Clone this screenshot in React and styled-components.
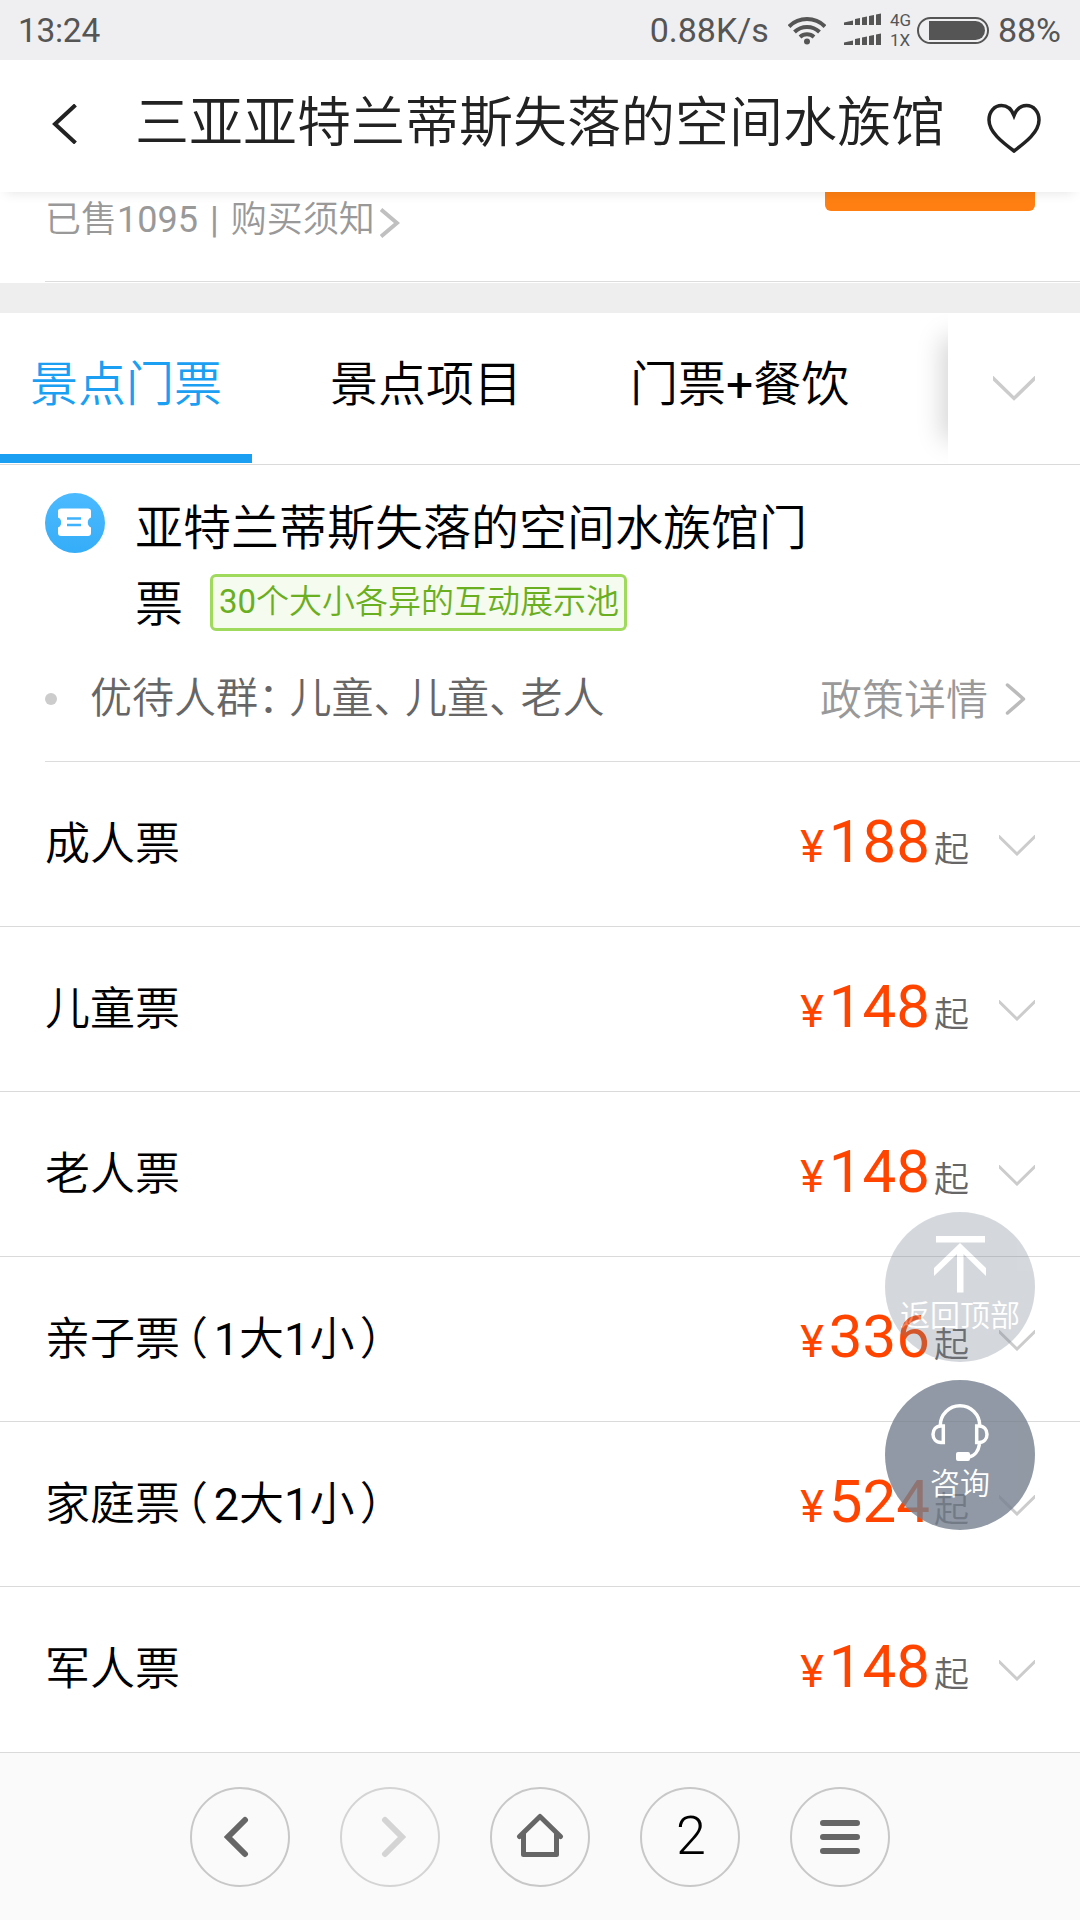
import styled, { createGlobalStyle, css } from "styled-components"

const GlobalStyle = createGlobalStyle`
  * {
    box-sizing: border-box;
  }
  body {
    margin: 0;
    background: #fff;
    color: #000;
    font-family: Roboto, "Noto Sans CJK SC", sans-serif;
    font-weight: 350;
  }
`

const Page = styled.div`
  position: relative;
  display: flex;
  flex-direction: column;
  width: 1080px;
  height: 1920px;
  overflow: hidden;
`

const StatusBar = styled.div`
  display: flex;
  align-items: center;
  justify-content: space-between;
  height: 60px;
  padding: 0 19px 0 18px;
  background: #efeff1;
  color: #555;
  font-size: 34px;
  font-weight: 400;
  line-height: 60px;
`

const Clock = styled.span`
  padding-top: 1px;
  font-size: 33.5px;
  letter-spacing: -0.3px;
`

const StatusIcons = styled.div`
  display: flex;
  align-items: center;
`

const Wifi = styled.svg`
  width: 38px;
  height: 30px;
  margin-left: 19px;
`

const Signals = styled.svg`
  width: 38px;
  height: 34px;
  margin-left: 18px;
`

const NetworkLabels = styled.div`
  width: 27px;
  margin-left: 8px;
  font-size: 17px;
  line-height: 20px;
`

const Battery = styled.div`
  width: 72px;
  height: 27px;
  margin-right: 9px;
  padding: 2px 2px 2px 10px;
  border: 2px solid #555;
  border-radius: 14px;
`

const BatteryLevel = styled.div`
  height: 19px;
  background: #555;
  border-radius: 0 10px 10px 0;
`

const Header = styled.header`
  position: relative;
  z-index: 1;
  display: flex;
  align-items: center;
  height: 132px;
  padding: 0 39px 0 52px;
  background: #fff;
  box-shadow: 0 6px 12px -6px rgba(0, 0, 0, 0.12);
`

const BackIcon = styled.svg`
  width: 25px;
  height: 40px;
  margin-bottom: 4px;
`

const HeartIcon = styled.svg`
  width: 54px;
  height: 50px;
  margin-top: 4px;
`

const Title = styled.h1`
  flex: 1;
  margin: 0 0 4px 58px;
  color: #222;
  font-size: 54px;
  font-weight: 350;
  line-height: 80px;
  white-space: nowrap;
`

const SoldRow = styled.div`
  display: flex;
  align-items: flex-start;
  justify-content: space-between;
  height: 90px;
  margin-left: 45px;
  padding-right: 45px;
  border-bottom: 1px solid #dcdcdc;
`

const SoldText = styled.div`
  display: flex;
  align-items: center;
  padding-top: 6px;
  color: #999;
  font-size: 36px;
  line-height: 44px;
  svg {
    margin: 6px 0 0 5px;
  }
`

const Num = styled.span`
  font-weight: 400;
`

const Bar = styled.span`
  margin: 0 12px;
  font-weight: 400;
`

const BookButton = styled.div`
  width: 210px;
  height: 19px;
  background: #ff7f12;
  border-radius: 0 0 6px 6px;
`

const Separator = styled.div`
  height: 30px;
  margin-top: 1px;
  background: #eee;
`

const Tabs = styled.nav`
  display: flex;
  gap: 48px;
  height: 152px;
  overflow: hidden;
  border-bottom: 1px solid #dadada;
`

const Tab = styled.div`
  height: 150px;
  padding: 34px 30px 0;
  font-size: 48px;
  line-height: 76px;
  white-space: nowrap;
  ${(props) =>
    props.$active &&
    css`
      color: #1a9ff2;
      border-bottom: 9px solid #1a9ff2;
    `}
`

const TabMore = styled.div`
  display: flex;
  align-items: center;
  justify-content: flex-end;
  width: 132px;
  margin-left: auto;
  padding-right: 45px;
  background: #fff;
  box-shadow: -30px 0 24px -24px rgba(0, 0, 0, 0.17);
`

const Product = styled.section`
  display: flex;
  padding: 28px 0 0 45px;
`

const TicketBadge = styled.svg`
  flex: none;
  width: 60px;
  height: 60px;
`

const ProductName = styled.h2`
  width: 690px;
  height: 150px;
  margin: -2px 0 0 30px;
  font-size: 48px;
  font-weight: 350;
  line-height: 76px;
`

const Tag = styled.span`
  display: inline-block;
  height: 57px;
  margin: 0 0 12px 27px;
  padding: 0 5px 0 6px;
  border: 3px solid #9fda5d;
  border-radius: 6px;
  background: #f6fbf0;
  color: #6aaf20;
  font-size: 33px;
  line-height: 49px;
  vertical-align: middle;
`

const PolicyRow = styled.div`
  display: flex;
  align-items: center;
  height: 121px;
  margin-left: 45px;
  padding: 0 54px 4px 0;
  border-bottom: 1px solid #dcdcdc;
  color: #666;
  font-size: 42px;
`

const Dot = styled.span`
  width: 12px;
  height: 12px;
  margin-right: 33px;
  border-radius: 50%;
  background: #ccc;
`

const PolicyText = styled.span`
  margin-bottom: 9px;
`

// half-width CJK punctuation with its own side spacing
const Mark = styled.span`
  margin-right: 0.25em;
  font-feature-settings: "halt";
`

const OpenMark = styled.span`
  margin: 0 0.13em 0 0.12em;
  font-feature-settings: "halt";
`

const CloseMark = styled.span`
  margin-left: 0.12em;
  font-feature-settings: "halt";
`

const PolicyLink = styled.div`
  display: flex;
  align-items: center;
  margin-left: auto;
  color: #999;
  span {
    margin-bottom: 5px;
  }
  svg {
    margin-left: 17px;
  }
`

const TicketRow = styled.div`
  display: flex;
  align-items: center;
  height: 165px;
  padding: 0 45px;
  border-bottom: 1px solid #dadada;
  font-size: 45px;
  &:last-of-type {
    border-bottom-color: transparent;
  }
  svg {
    margin: 2px 0 0 30px;
  }
`

const TicketName = styled.span`
  margin-bottom: 7px;
`

const Price = styled.div`
  display: flex;
  align-items: baseline;
  margin: 0 0 5px auto;
  color: #ff4400;
  font-size: 60px;
  font-weight: 400;
`

const Currency = styled.span`
  margin-right: 5px;
  font-size: 45px;
`

const From = styled.span`
  margin-left: 4px;
  color: #666;
  font-size: 35px;
  font-weight: 350;
`

const Floats = styled.aside`
  position: absolute;
  top: 1212px;
  right: 45px;
  display: flex;
  flex-direction: column;
  gap: 18px;
`

const FloatButton = styled.div`
  display: flex;
  flex-direction: column;
  align-items: center;
  gap: 2px;
  width: 150px;
  height: 150px;
  padding-top: 22px;
  border-radius: 50%;
  background: #75808f;
  color: #fff;
  font-size: 30px;
  line-height: 40px;
  opacity: ${(props) => (props.$faded ? 0.3 : 0.8)};
`

const BottomBar = styled.footer`
  display: flex;
  justify-content: center;
  gap: 50px;
  flex: 1;
  padding-top: 34px;
  border-top: 1px solid #dadada;
  background: #fafafa;
`

const NavButton = styled.div`
  display: flex;
  align-items: center;
  justify-content: center;
  width: 100px;
  height: 100px;
  border: 2px solid #c8c8c8;
  border-radius: 50%;
  opacity: ${(props) => (props.$disabled ? 0.75 : 1)};
`

const PageCount = styled.span`
  margin: 0 0 3px 2px;
  font-size: 54px;
`

const tickets = [
  { name: "成人票", price: 188 },
  { name: "儿童票", price: 148 },
  { name: "老人票", price: 148 },
  { name: "亲子票", adults: 1, price: 336 },
  { name: "家庭票", adults: 2, price: 524 },
  { name: "军人票", price: 148 },
]

function Down({ width, height }) {
  return (
    <svg width={width} height={height} viewBox="0 0 36 21" fill="none">
      <path d="M-1 0.5 18 19 37 0.5" stroke="#ccc" strokeWidth="3" />
    </svg>
  )
}

function SignalBars({ y }) {
  return (
    <g transform={`translate(0 ${y})`}>
      <path d="M0 12V9.5L9 7.5V12Z" />
      <path d="M11 12V6l5-1v7Z" />
      <path d="M18 12V4.5l5-1V12Z" />
      <path d="M25 12V3l5-1v10Z" />
      <path d="M32 12V1.5l5-1V12Z" />
    </g>
  )
}

function App() {
  return (
    <Page>
      <GlobalStyle />
      <StatusBar>
        <Clock>13:24</Clock>
        <StatusIcons>
          <span>0.88K/s</span>
          <Wifi viewBox="0 0 38 30" fill="none" stroke="#555" strokeWidth="4">
            <path d="M1 11.5a25.5 25.5 0 0 1 36 0" />
            <path d="M6.5 17a18 18 0 0 1 25 0" />
            <path d="M12 22a10.5 10.5 0 0 1 14 0" />
            <circle cx="19" cy="26.5" r="3" fill="#555" stroke="none" />
          </Wifi>
          <Signals viewBox="0 0 38 34" fill="#555">
            <SignalBars y={0} />
            <SignalBars y={20} />
          </Signals>
          <NetworkLabels>
            <div>4G</div>
            <div>1X</div>
          </NetworkLabels>
          <Battery>
            <BatteryLevel />
          </Battery>
          <span>88%</span>
        </StatusIcons>
      </StatusBar>

      <Header>
        <BackIcon viewBox="0 0 25 40" fill="none">
          <path d="M23.5 1 3 20l20.5 19" stroke="#222" strokeWidth="4" />
        </BackIcon>
        <Title>三亚亚特兰蒂斯失落的空间水族馆</Title>
        <HeartIcon viewBox="0 0 54 50" fill="none">
          <path
            d="M27 12.5C24.5 6 19.5 2.5 14.5 2.5 7.5 2.5 2 8.5 2 17c0 12 13 22 25 31 12-9 25-19 25-31 0-8.5-5.5-14.5-12.5-14.5-5 0-10 3.5-12.5 10Z"
            stroke="#222"
            strokeWidth="3.5"
          />
        </HeartIcon>
      </Header>

      <SoldRow>
        <SoldText>
          已售<Num>1095</Num>
          <Bar>|</Bar>
          购买须知
          <svg width="20" height="30" viewBox="0 0 20 30" fill="none">
            <path d="M1 1.5 17 15 1 28.5" stroke="#c0c0c0" strokeWidth="4" />
          </svg>
        </SoldText>
        <BookButton />
      </SoldRow>
      <Separator />

      <Tabs>
        <Tab $active>景点门票</Tab>
        <Tab>景点项目</Tab>
        <Tab>
          门票<Num>+</Num>餐饮
        </Tab>
        <TabMore>
          <Down width={42} height={25} />
        </TabMore>
      </Tabs>

      <Product>
        <TicketBadge viewBox="0 0 60 60">
          <defs>
            <linearGradient id="badge" x1="0" y1="0" x2="0" y2="1">
              <stop offset="0" stopColor="#4cbaff" />
              <stop offset="1" stopColor="#35adf8" />
            </linearGradient>
          </defs>
          <circle cx="30" cy="30" r="30" fill="url(#badge)" />
          <path
            d="M16 15.5h27a3 3 0 0 1 3 3v6a5.500 5.500 0 0 0 0 10V40a3 3 0 0 1-3 3H16a3 3 0 0 1-3-3v-5.500a5.500 5.500 0 0 0 0-10v-6a3 3 0 0 1 3-3Z"
            fill="#fff"
          />
          <path d="M22 25.500h14M22 32h14" stroke="#3fb2fb" strokeWidth="2.5" />
        </TicketBadge>
        <ProductName>
          亚特兰蒂斯失落的空间水族馆门票
          <Tag>
            <Num>30</Num>个大小各异的互动展示池
          </Tag>
        </ProductName>
      </Product>

      <PolicyRow>
        <Dot />
        <PolicyText>
          优待人群<Mark>：</Mark>儿童<Mark>、</Mark>儿童<Mark>、</Mark>老人
        </PolicyText>
        <PolicyLink>
          <span>政策详情</span>
          <svg width="21" height="32" viewBox="0 0 21 32" fill="none">
            <path
              d="M2.5 2 18.5 16 2.5 30"
              stroke="#bbb"
              strokeWidth="3.5"
              strokeLinecap="round"
              strokeLinejoin="round"
            />
          </svg>
        </PolicyLink>
      </PolicyRow>

      <main>
        {tickets.map((ticket) => (
          <TicketRow key={ticket.name}>
            <TicketName>
              {ticket.name}
              {ticket.adults && (
                <>
                  <OpenMark>（</OpenMark>
                  <Num>{ticket.adults}</Num>大<Num>1</Num>小
                  <CloseMark>）</CloseMark>
                </>
              )}
            </TicketName>
            <Price>
              <Currency>¥</Currency>
              {ticket.price}
              <From>起</From>
            </Price>
            <Down width={36} height={21} />
          </TicketRow>
        ))}
      </main>

      <BottomBar>
        <NavButton>
          <svg width="32" height="42" viewBox="0 0 32 42" fill="none">
            <path
              d="M21 4 4 21l17 17"
              stroke="#666"
              strokeWidth="6"
              strokeLinecap="round"
            />
          </svg>
        </NavButton>
        <NavButton $disabled>
          <svg width="32" height="42" viewBox="0 0 32 42" fill="none">
            <path
              d="M11 4l17 17-17 17"
              stroke="#c8c8c8"
              strokeWidth="6"
              strokeLinecap="round"
            />
          </svg>
        </NavButton>
        <NavButton>
          <svg width="48" height="48" viewBox="0 0 48 48" fill="none">
            <path
              d="M3.5 23.5 24 3.5l20.5 20M7.5 21v20.5h33V21"
              stroke="#666"
              strokeWidth="5"
              strokeLinecap="round"
              strokeLinejoin="round"
            />
          </svg>
        </NavButton>
        <NavButton>
          <PageCount>2</PageCount>
        </NavButton>
        <NavButton>
          <svg width="40" height="34" viewBox="0 0 40 34">
            <path
              d="M3 3h34M3 17h34M3 31h34"
              stroke="#666"
              strokeWidth="6"
              strokeLinecap="round"
            />
          </svg>
        </NavButton>
      </BottomBar>

      <Floats>
        <FloatButton $faded>
          <svg width="54" height="60" viewBox="0 0 54 60" fill="#fff">
            <path d="M3 2h49v6.5H3ZM27 9 53 34v8L30.5 20v38.5h-6.5V20L1 42v-8Z" />
          </svg>
          返回顶部
        </FloatButton>
        <FloatButton>
          <svg
            width="60"
            height="60"
            viewBox="0 0 60 60"
            fill="none"
            stroke="#fff"
            strokeWidth="3.5"
          >
            <path d="M10.3 23.5a19.7 19.7 0 0 1 39.4 0" />
            <path d="M13.3 24v16.5H11c-5 0-8-3.5-8-8.2S6 24 11 24Z" />
            <path d="M46.7 24v16.5H49c5 0 8-3.5 8-8.2S54 24 49 24Z" />
            <path d="M49.5 42c-1 7-5 12-10.5 13" />
            <rect x="26" y="50" width="14" height="9" rx="2" fill="#fff" stroke="none" />
          </svg>
          咨询
        </FloatButton>
      </Floats>
    </Page>
  )
}

export default App
